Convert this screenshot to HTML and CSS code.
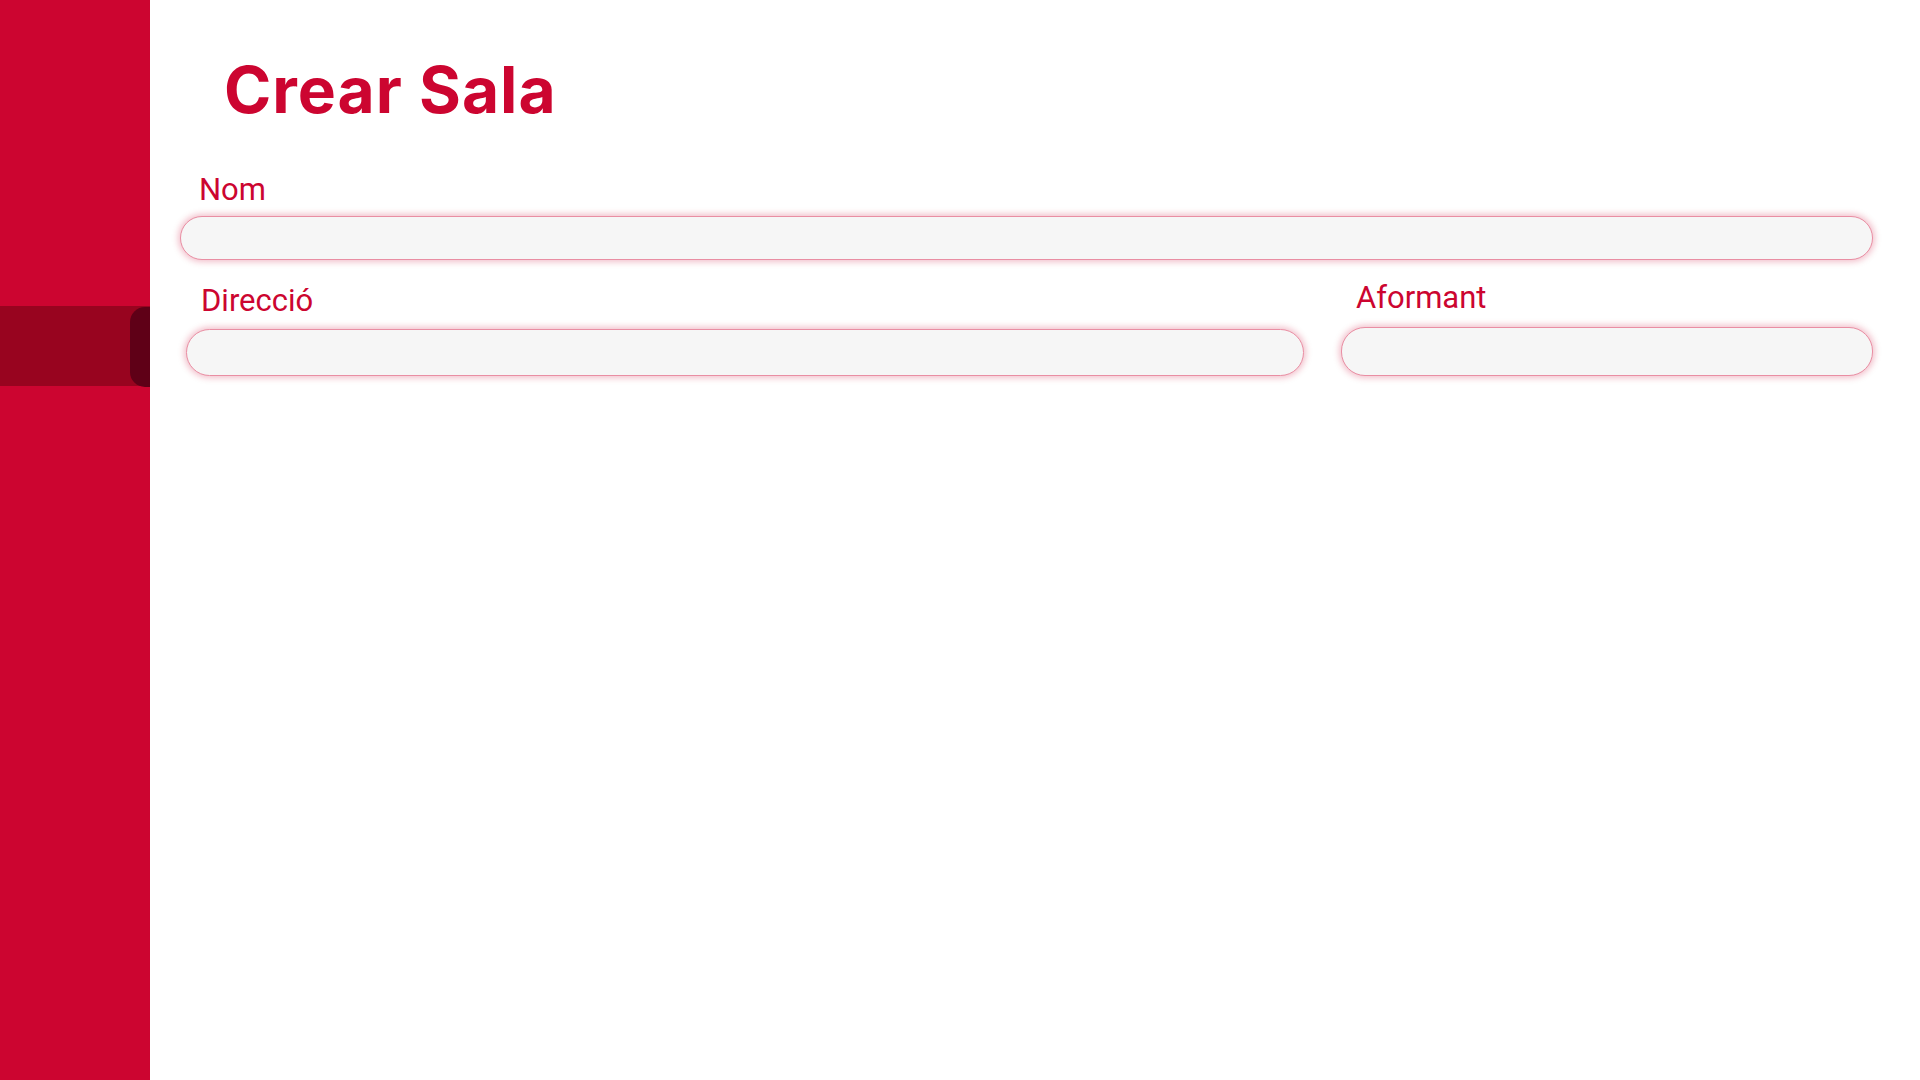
FILE: index.html
```html
<!DOCTYPE html>
<html lang="ca">
<head>
<meta charset="utf-8">
<title>Crear Sala</title>
<link rel="stylesheet" href="styles.css">
</head>
<body>
<div class="app">
  <nav class="sidebar">
    <div class="nav-item active">
      <span class="nav-tab"></span>
    </div>
  </nav>
  <main class="main">
    <h1 class="title">Crear Sala</h1>
    <form class="form">
      <div class="field field-nom">
        <label class="label" for="nom">Nom</label>
        <input class="input" id="nom" type="text">
      </div>
      <div class="row">
        <div class="field field-dir">
          <label class="label" for="direccio">Direcció</label>
          <input class="input" id="direccio" type="text">
        </div>
        <div class="field field-afo">
          <label class="label" for="aforament">Aformant</label>
          <input class="input" id="aforament" type="text">
        </div>
      </div>
    </form>
  </main>
</div>
</body>
</html>
```
FILE: styles.css
```css
* { box-sizing: border-box; }
html, body { margin: 0; padding: 0; height: 100%; background: #ffffff; }
body { font-family: Roboto, "Noto Sans", sans-serif; }

.app {
  display: flex;
  min-height: 1080px;
}

.sidebar {
  width: 150px;
  flex: 0 0 150px;
  background: #cc0530;
  padding-top: 306px;
}

.nav-item {
  height: 80px;
  display: flex;
  justify-content: flex-end;
  align-items: stretch;
}
.nav-item.active { background: #98041f; }

.nav-tab {
  width: 20px;
  margin: 1px 0 -1px;
  background: #5f0017;
  border-radius: 15px 0 0 15px;
}

.main {
  flex: 1;
  padding: 0 47px 0 30px;
}

.title {
  margin: 0;
  padding: 58px 0 0 44px;
  font-family: Inter, "Open Sans", sans-serif;
  font-weight: 700;
  font-size: 64px;
  line-height: 1;
  color: #cc0530;
  letter-spacing: 1px;
}

.form {
  display: flex;
  flex-direction: column;
  margin-top: 50px;
}

.field {
  display: flex;
  flex-direction: column;
}

.label {
  font-family: Roboto, sans-serif;
  font-size: 31px;
  line-height: 36px;
  color: #cc0530;
  margin-bottom: 8px;
}

.field-nom .label { padding-left: 19px; }

.input {
  height: 44px;
  width: 100%;
  border: 1.5px solid #e98ea3;
  border-radius: 24px;
  background: #f6f6f6;
  box-shadow: 0 0 6px 2px rgba(204, 5, 48, 0.25);
  outline: none;
  padding: 0 20px;
  font-family: Roboto, sans-serif;
  font-size: 20px;
}

.row {
  display: grid;
  grid-template-columns: 1124fr 532fr;
  column-gap: 37px;
  margin-top: 20px;
  align-items: end;
}

.field-dir { padding-left: 6px; }
.field-dir .label { padding-left: 15px; margin-bottom: 10px; }
.field-dir .input { height: 47px; }
.field-afo .label { padding-left: 15px; margin-bottom: 11px; }
.field-afo .input { height: 49px; }
```
